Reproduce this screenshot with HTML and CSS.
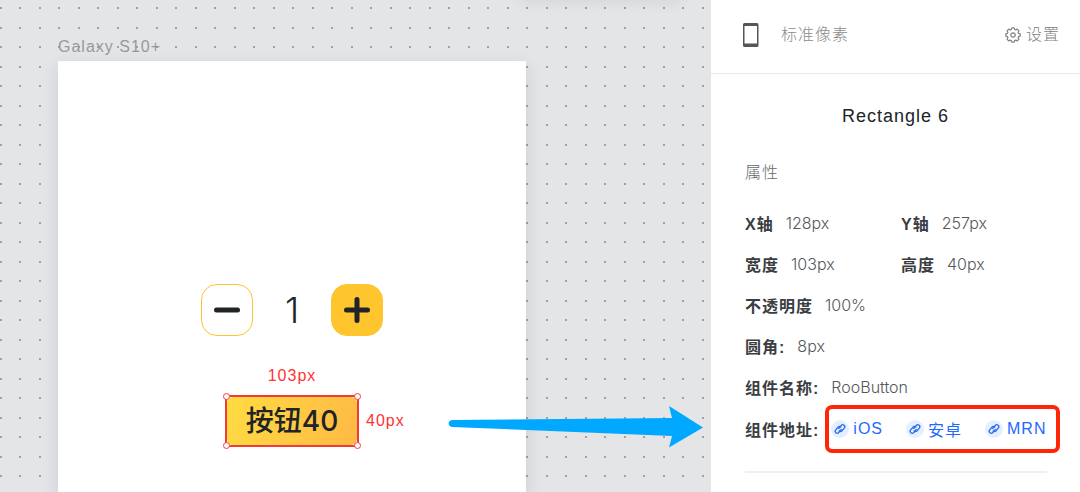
FILE: index.html
```
<!DOCTYPE html>
<html lang="zh-CN">
<head>
<meta charset="UTF-8">
<meta name="viewport" content="width=device-width, initial-scale=1.0">
<title>Galaxy S10+</title>
<link rel="stylesheet" href="styles.css">
</head>
<body>
    <svg class="sprite" aria-hidden="true">
        <symbol id="link" viewBox="0 0 18 18">
            <circle cx="9" cy="9" r="9" fill="#e6efff"/>
            <g transform="rotate(-50 9 9)" fill="none" stroke="#2a6df4" stroke-width="1.3" stroke-linecap="round">
                <path d="M9.500 10.300H5.500a2 2 0 0 1 0-4H9a2 2 0 0 1 2 2"/>
                <path d="M8.500 7.700h4a2 2 0 0 1 0 4H9a2 2 0 0 1-2-2"/>
            </g>
        </symbol>
    </svg>

    <main class="canvas">
        <div class="toolbar-shadow"></div>
        <div class="board-name">Galaxy S10+</div>
        <div class="board">
            <div class="stepper">
                <button class="step minus" aria-label="减少">
                    <svg width="26" height="26" viewBox="0 0 26 26"><path d="M2.5 13h21"/></svg>
                </button>
                <span class="count">1</span>
                <button class="step plus" aria-label="增加">
                    <svg width="26" height="26" viewBox="0 0 26 26"><path d="M2.5 13h21M13 2.5v21"/></svg>
                </button>
            </div>
            <div class="size">103px</div>
            <div class="selection">
                <button class="roo-button">按钮40</button>
                <i class="handle top left"></i>
                <i class="handle top right"></i>
                <i class="handle bottom left"></i>
                <i class="handle bottom right"></i>
                <span class="size side">40px</span>
            </div>
        </div>
        <svg class="arrow" width="256" height="42" viewBox="0 0 256 42" aria-hidden="true">
            <path d="M4 14L224 12L221 0L255 21.500L221 41.500L224 30L4 21C-0.500 20.500-0.500 14.500 4 14Z" fill="#00a8ff"/>
        </svg>
    </main>

    <aside class="panel">
        <header class="panel-header">
            <svg width="16" height="24" viewBox="0 0 16 24" aria-hidden="true">
                <path fill="#54575a" fill-rule="evenodd" d="M1.500 0h12.500a1.500 1.500 0 0 1 1.500 1.500v21a1.500 1.500 0 0 1-1.500 1.500h-12.500A1.500 1.500 0 0 1 0 22.500v-21A1.500 1.500 0 0 1 1.500 0zM1.500 3v17.500h12.500V3z"/>
            </svg>
            <span class="unit">标准像素</span>
            <button class="settings">
                <svg width="16" height="16" viewBox="0 0 16 16" fill="none" stroke="#808386" stroke-width="1.200" stroke-linejoin="round" aria-hidden="true">
                    <path d="M6.800.8h2.400l.5 1.700 1 .4 1.600-.8 1.700 1.700-.9 1.500.4 1 1.700.5v2.400l-1.700.5-.4 1 .9 1.500-1.700 1.700-1.600-.8-1 .4-.5 1.700H6.800l-.5-1.700-1-.4-1.600.8L2 12.200l.9-1.500-.4-1-1.700-.5V6.800l1.700-.5.4-1L2 3.800l1.700-1.700 1.600.8 1-.4z"/>
                    <circle cx="8" cy="8" r="2.200"/>
                </svg>
                设置
            </button>
        </header>

        <h1>Rectangle 6</h1>
        <h2>属性</h2>
        <dl class="props">
            <div><dt>X轴</dt><dd>128px</dd></div>
            <div><dt>Y轴</dt><dd>257px</dd></div>
            <div><dt>宽度</dt><dd>103px</dd></div>
            <div><dt>高度</dt><dd>40px</dd></div>
            <div class="wide"><dt>不透明度</dt><dd>100%</dd></div>
            <div class="wide"><dt>圆角:</dt><dd>8px</dd></div>
            <div class="wide"><dt>组件名称:</dt><dd>RooButton</dd></div>
            <div class="wide">
                <dt>组件地址:</dt>
                <dd class="links">
                    <a href="#ios"><svg><use href="#link"/></svg>iOS</a>
                    <a href="#android"><svg><use href="#link"/></svg>安卓</a>
                    <a href="#mrn"><svg><use href="#link"/></svg>MRN</a>
                </dd>
            </div>
        </dl>
    </aside>
</body>
</html>
```
FILE: styles.css
```
* {
    box-sizing: border-box;
}
body {
    display: flex;
    min-height: 100vh;
    margin: 0;
    font-family: "Liberation Sans", "Noto Sans CJK SC", sans-serif;
    font-size: 16px;
    letter-spacing: 1px;
    color: #3a3e42;
    background: #fff;
}
button {
    padding: 0;
    border: none;
    background: none;
    font: inherit;
    letter-spacing: inherit;
    cursor: pointer;
}
.sprite {
    position: absolute;
    width: 0;
    height: 0;
}

/* canvas */
.canvas {
    position: relative;
    flex: 1;
    display: flex;
    flex-direction: column;
    padding: 36px 58px 0;
    overflow: hidden;
    background-color: #e4e5e7;
    background-image:
        radial-gradient(circle at 1px 8px, #a0a1a4 1px, transparent 1px),
        radial-gradient(circle at 20px 8px, #a0a1a4 1px, transparent 1px),
        radial-gradient(circle at 1px 28px, #a0a1a4 1px, transparent 1px),
        radial-gradient(circle at 20px 28px, #a0a1a4 1px, transparent 1px);
    background-size: 39px 39px;
}
.toolbar-shadow {
    position: absolute;
    top: -20px;
    right: 30px;
    width: 160px;
    height: 20px;
    box-shadow: 0 0 16px rgba(40, 45, 60, 0.1);
}
.board-name {
    height: 25px;
    line-height: 21px;
    color: #97999c;
}
.board {
    flex: 1;
    display: flex;
    flex-direction: column;
    align-items: center;
    width: 468px;
    padding-top: 223px;
    background: #fff;
    box-shadow: 0 6px 16px rgba(40, 50, 80, 0.13);
}
.stepper {
    display: flex;
    align-items: center;
}
.step {
    display: flex;
    align-items: center;
    justify-content: center;
    width: 52px;
    height: 52px;
    border: 1px solid #ffc52f;
    border-radius: 16px;
}
.step path {
    stroke: #202426;
    stroke-width: 5;
    stroke-linecap: round;
}
.plus {
    background: #ffc52f;
}
.count {
    width: 78px;
    font-family: Inter, sans-serif;
    font-size: 36px;
    font-weight: 300;
    line-height: 52px;
    text-align: center;
    letter-spacing: 0;
    color: #202426;
}
.size {
    margin-top: 30px;
    line-height: 20px;
    color: #ff3333;
}
.selection {
    position: relative;
    width: 134px;
    height: 52px;
    margin-top: 9px;
    border: 2px solid #f33b35;
}
.roo-button {
    display: block;
    width: 100%;
    height: 100%;
    border-radius: 6px;
    background: linear-gradient(110deg, #ffdc42, #ffb945);
    font-family: Inter, "Noto Sans CJK SC", sans-serif;
    font-size: 28px;
    font-weight: 500;
    line-height: 48px;
    letter-spacing: 0;
    color: #202426;
}
.handle {
    position: absolute;
    width: 7px;
    height: 7px;
    border: 1px solid #f33b35;
    border-radius: 50%;
    background: #fff;
}
.top {
    top: -4px;
}
.bottom {
    bottom: -4px;
}
.left {
    left: -4px;
}
.right {
    right: -4px;
}
.side {
    position: absolute;
    top: 14px;
    left: 100%;
    margin: 0 0 0 9px;
}
.arrow {
    position: absolute;
    top: 406px;
    left: 448px;
}

/* inspector */
.panel {
    width: 369px;
    background: #fff;
}
.panel-header {
    display: flex;
    align-items: center;
    height: 74px;
    padding: 0 20px 4px 32px;
    border-bottom: 1px solid #e9e9ea;
    line-height: 20px;
    color: #888b8e;
}
.unit {
    margin-left: 22px;
    font-weight: 300;
}
.settings {
    display: flex;
    align-items: center;
    gap: 5px;
    margin-left: auto;
    font-weight: 300;
    color: #808386;
}
h1 {
    margin: 30px 0 0;
    font-size: 18px;
    font-weight: 400;
    line-height: 24px;
    text-align: center;
    color: #202426;
}
h2 {
    margin: 33px 34px 0;
    font-size: 16px;
    font-weight: 300;
    line-height: 24px;
    color: #66696c;
}
.props {
    display: grid;
    grid-template-columns: 156px 1fr;
    grid-template-rows: repeat(5, 41px) 44px;
    margin: 17px 33px 0 34px;
    padding-bottom: 20px;
    border-bottom: 2px solid #f0f0f1;
}
.props div {
    display: flex;
    align-items: center;
}
.props .wide {
    grid-column: 1 / -1;
}
dt {
    font-weight: 700;
    white-space: nowrap;
}
dd {
    margin: 0 0 0 12px;
    font-family: Inter, "Noto Sans CJK SC", sans-serif;
    font-weight: 300;
    letter-spacing: 0;
    color: #55585c;
}
.links {
    position: relative;
    display: flex;
    gap: 23px;
    font-family: "Liberation Sans", "Noto Sans CJK SC", sans-serif;
    font-weight: 400;
    letter-spacing: 1px;
}
.links::after {
    content: "";
    position: absolute;
    inset: -12px -14px -12px -6px;
    border: 4px solid #ff2608;
    border-radius: 7px;
    pointer-events: none;
}
.links a {
    display: flex;
    align-items: center;
    gap: 4px;
    color: #1f69ff;
    text-decoration: none;
    white-space: nowrap;
}
.links svg {
    width: 18px;
    height: 18px;
}
```
